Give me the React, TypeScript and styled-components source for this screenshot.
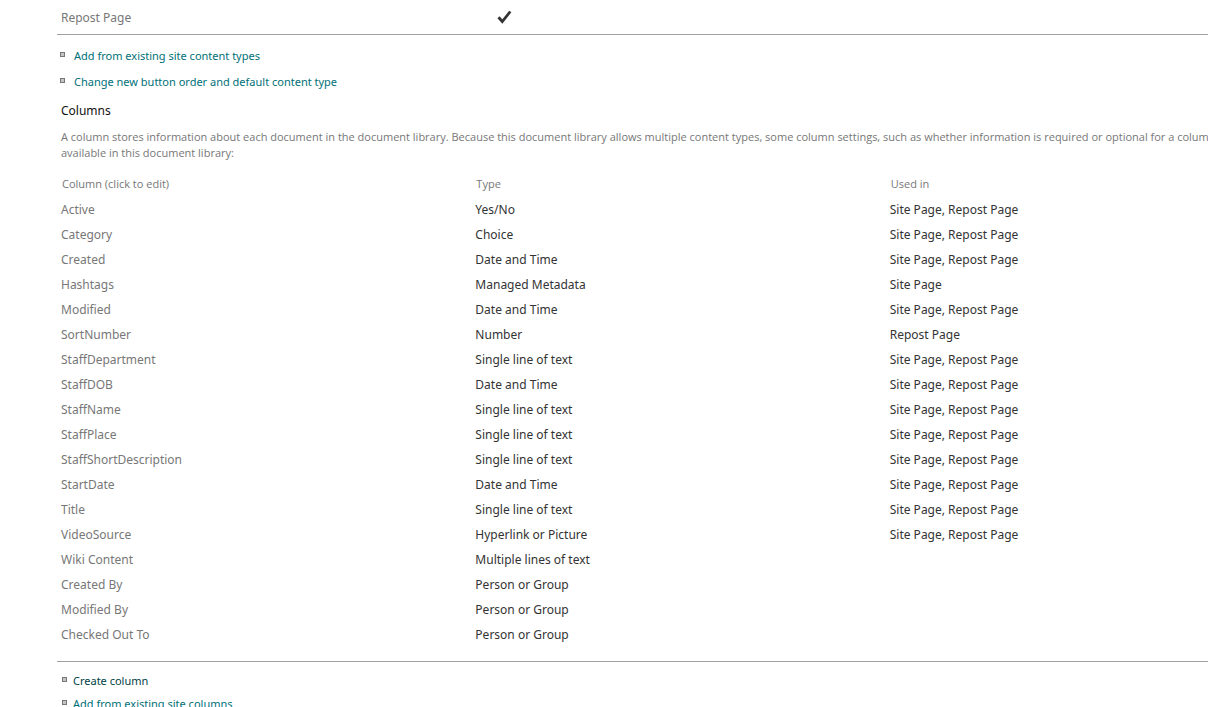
import React from 'react';
import styled, { createGlobalStyle } from 'styled-components';

const GlobalStyle = createGlobalStyle`
  * { box-sizing: border-box; }
  body {
    margin: 0;
    background: #fff;
    color: #333;
    font-family: 'Segoe UI', 'Open Sans', sans-serif;
    font-size: 12px;
    overflow-x: hidden;
  }
`;

const Page = styled.main`
  padding-left: 57px;
`;

const Table = styled.table`
  width: 100%;
  table-layout: fixed;
  border-collapse: collapse;
`;

const HeadCell = styled.th<{ $width: string }>`
  width: ${(p) => p.$width};
  height: 26px;
  padding: 0 5px 2px;
  text-align: left;
  font-size: 11px;
  font-weight: 400;
  color: #777;
`;

const Cell = styled.td<{ $width?: string }>`
  width: ${(p) => p.$width ?? 'auto'};
  height: 25px;
  padding: 0 4px;
  font-family: 'Segoe UI', 'Noto Sans', sans-serif;
  line-height: 18px;
  white-space: nowrap;
`;

const ItemLink = styled.a`
  color: #777;
  text-decoration: none;
`;

const ContentTypes = styled.section`
  height: 35px;
  padding-top: 5px;
  border-bottom: 1px solid #a0a0a0;
`;

const Check = styled.svg`
  display: block;
  margin: 0 0 2px 22px;
`;

const Actions = styled.ul<{ $row: number; $indent: number; $gap: number }>`
  margin: 0;
  padding: 7px 0 0 ${(p) => p.$indent}px;
  list-style: none;

  li {
    display: flex;
    align-items: center;
    gap: ${(p) => p.$gap}px;
    height: ${(p) => p.$row}px;
  }
`;

const Bullet = styled.span`
  width: 5px;
  height: 5px;
  margin-bottom: 2px;
  border: 1px solid #777;
  background: #c4c4c4;
`;

const ActionLink = styled.a<{ $dark?: boolean }>`
  color: ${(p) => (p.$dark ? '#003f44' : '#007078')};
  font-family: 'Segoe UI', 'Noto Sans', sans-serif;
  font-size: 11px;
  text-decoration: none;
`;

const Heading = styled.h3`
  margin: 6px 0 0;
  padding-left: 4px;
  font-family: 'Segoe UI', 'Noto Sans', sans-serif;
  font-size: 12px;
  font-weight: 400;
  line-height: 22px;
  color: #111;
`;

const Description = styled.p`
  margin: 7px 0 10px;
  padding-left: 4px;
  font-size: 11px;
  line-height: 16px;
  color: #777;
  white-space: nowrap;
  overflow: hidden;
`;

const ColumnList = styled.section`
  padding-bottom: 14px;
  border-bottom: 1px solid #a0a0a0;
`;

const both = 'Site Page, Repost Page';
const columns = [
  ['Active', 'Yes/No', both],
  ['Category', 'Choice', both],
  ['Created', 'Date and Time', both],
  ['Hashtags', 'Managed Metadata', 'Site Page'],
  ['Modified', 'Date and Time', both],
  ['SortNumber', 'Number', 'Repost Page'],
  ['StaffDepartment', 'Single line of text', both],
  ['StaffDOB', 'Date and Time', both],
  ['StaffName', 'Single line of text', both],
  ['StaffPlace', 'Single line of text', both],
  ['StaffShortDescription', 'Single line of text', both],
  ['StartDate', 'Date and Time', both],
  ['Title', 'Single line of text', both],
  ['VideoSource', 'Hyperlink or Picture', both],
  ['Wiki Content', 'Multiple lines of text', ''],
  ['Created By', 'Person or Group', ''],
  ['Modified By', 'Person or Group', ''],
  ['Checked Out To', 'Person or Group', ''],
];

function Action({ children, dark }: { children: string; dark?: boolean }) {
  return (
    <li>
      <Bullet />
      <ActionLink href="#" $dark={dark}>{children}</ActionLink>
    </li>
  );
}

export default function App() {
  return (
    <Page>
      <GlobalStyle />
      <ContentTypes>
        <Table>
          <tbody>
            <tr>
              <Cell $width="36%"><ItemLink href="#">Repost Page</ItemLink></Cell>
              <Cell>
                <Check width="16" height="14" viewBox="0 0 16 14" role="img" aria-label="Visible">
                  <path d="M1.5 7.3 L5.3 11.5 L13.3 1.5" fill="none" stroke="#333" strokeWidth="2.8" />
                </Check>
              </Cell>
            </tr>
          </tbody>
        </Table>
      </ContentTypes>
      <Actions $row={26} $indent={3} $gap={9}>
        <Action>Add from existing site content types</Action>
        <Action>Change new button order and default content type</Action>
      </Actions>
      <Heading>Columns</Heading>
      <Description>
        A column stores information about each document in the document library. Because this document library allows multiple content types, some column settings, such as whether information is required or optional for a column
        <br />
        available in this document library:
      </Description>
      <ColumnList>
        <Table>
          <thead>
            <tr>
              <HeadCell $width="36%">Column (click to edit)</HeadCell>
              <HeadCell $width="36%">Type</HeadCell>
              <HeadCell $width="28%">Used in</HeadCell>
            </tr>
          </thead>
          <tbody>
            {columns.map(([name, type, usedIn]) => (
              <tr key={name}>
                <Cell><ItemLink href="#">{name}</ItemLink></Cell>
                <Cell>{type}</Cell>
                <Cell>{usedIn}</Cell>
              </tr>
            ))}
          </tbody>
        </Table>
      </ColumnList>
      <Actions $row={23} $indent={5} $gap={6}>
        <Action dark>Create column</Action>
        <Action>Add from existing site columns</Action>
      </Actions>
    </Page>
  );
}
